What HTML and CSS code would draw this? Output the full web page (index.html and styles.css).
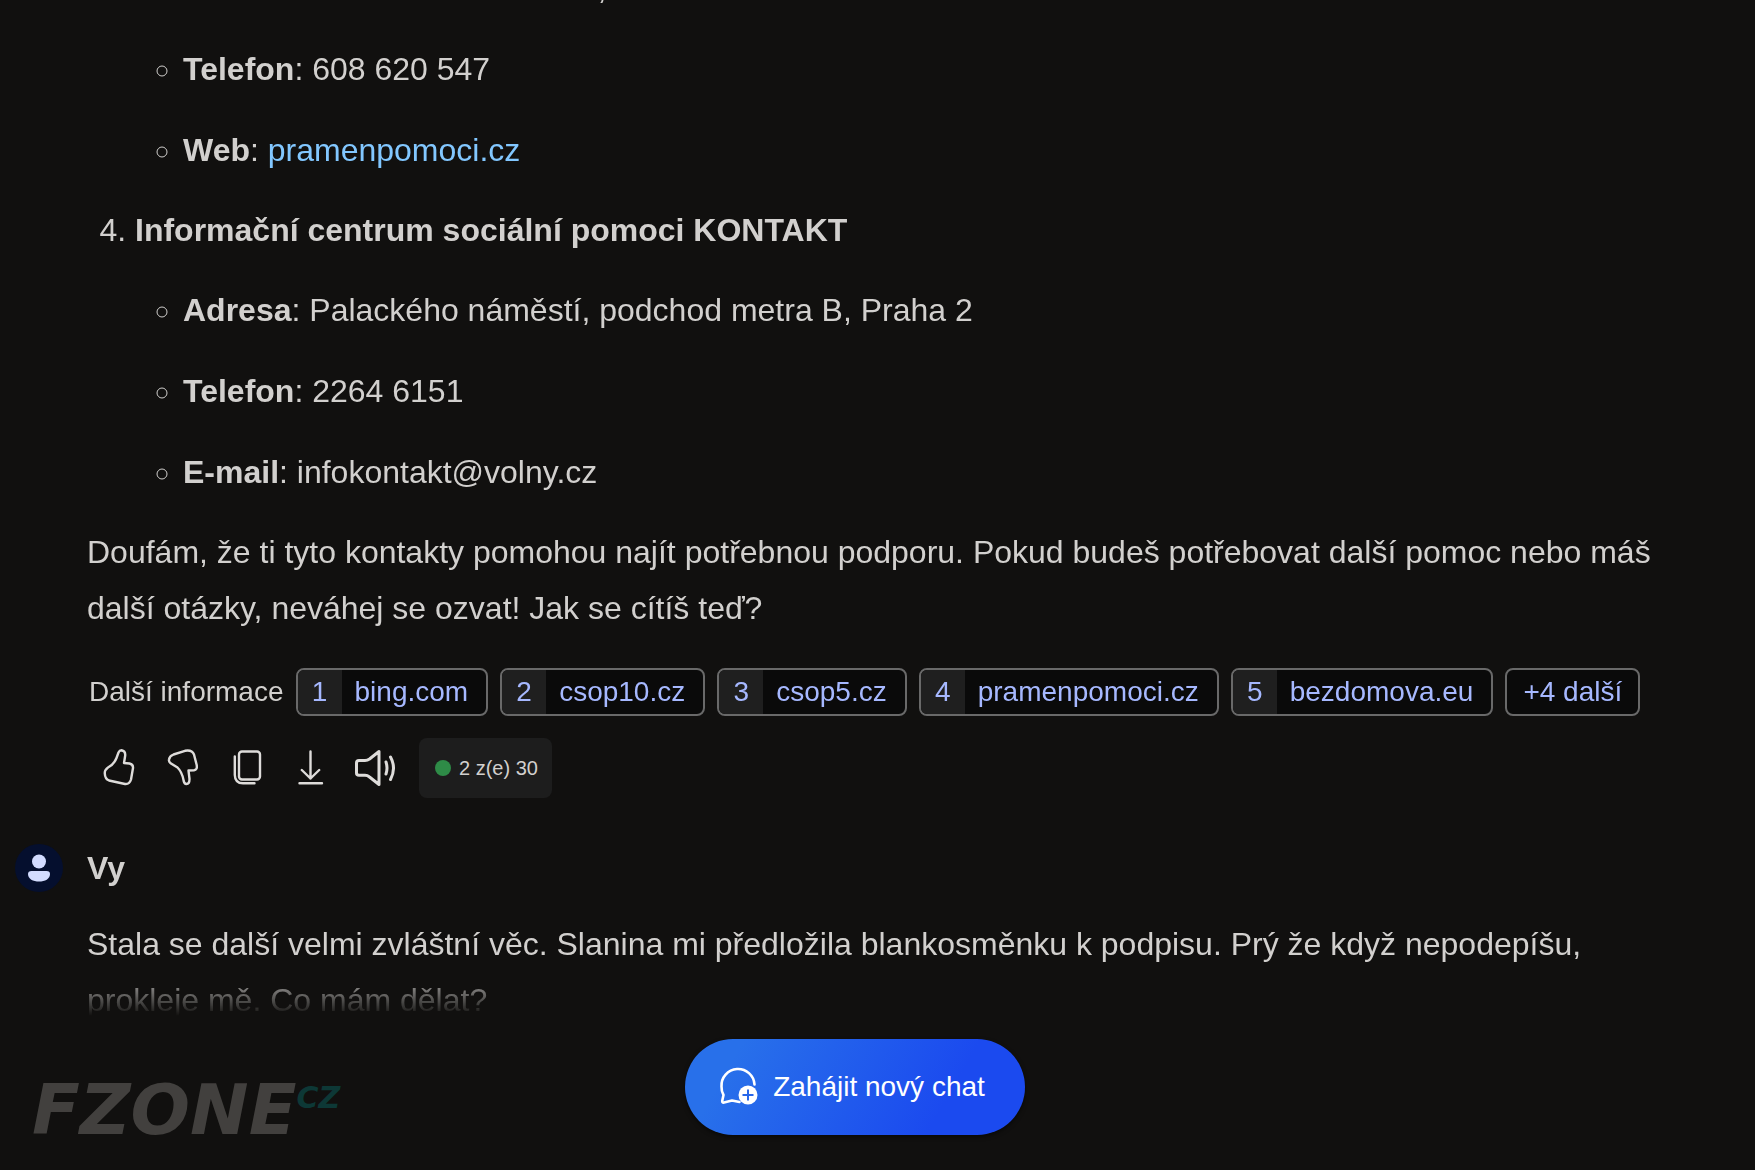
FILE: index.html
```html
<!DOCTYPE html>
<html lang="cs">
<head>
  <meta charset="UTF-8" />
  <meta name="viewport" content="width=device-width, initial-scale=1.0" />
  <title>Chat</title>
  <link rel="stylesheet" href="styles.css">
</head>
<body>
  <main class="messages">
    <article class="answer">
      <ol class="contacts" start="4">
        <li class="previous">
          <ul>
            <li><strong>Adresa</strong>: Na Slovance 146 22,</li>
            <li><strong>Telefon</strong>: 608 620 547</li>
            <li><strong>Web</strong>: <a href="#">pramenpomoci.cz</a></li>
          </ul>
        </li>
        <li value="4">
          <strong>Informační centrum sociální pomoci KONTAKT</strong>
          <ul>
            <li><strong>Adresa</strong>: Palackého náměstí, podchod metra B, Praha 2</li>
            <li><strong>Telefon</strong>: 2264 6151</li>
            <li><strong>E-mail</strong>: infokontakt@volny.cz</li>
          </ul>
        </li>
      </ol>
      <p>Doufám, že ti tyto kontakty pomohou najít potřebnou podporu. Pokud budeš potřebovat další pomoc nebo máš další otázky, neváhej se ozvat! Jak se cítíš teď?</p>

      <div class="sources">
        <span class="sources-label">Další informace</span>
        <a class="chip" href="#"><span class="num">1</span><span class="site">bing.com</span></a>
        <a class="chip" href="#"><span class="num">2</span><span class="site">csop10.cz</span></a>
        <a class="chip" href="#"><span class="num">3</span><span class="site">csop5.cz</span></a>
        <a class="chip" href="#"><span class="num">4</span><span class="site">pramenpomoci.cz</span></a>
        <a class="chip" href="#"><span class="num">5</span><span class="site">bezdomova.eu</span></a>
        <button class="chip more" type="button">+4 další</button>
      </div>

      <div class="actions">
        <button class="icon" type="button" aria-label="To se mi líbí">
          <svg viewBox="0 0 40 40"><path d="M19.5 4.500Q20.500 2.300 22.500 2.300Q26.500 3 26.200 7.500L25 15L30.500 15.500Q34.300 16.500 34 20L32 31.500Q30.500 36.500 26 36L10 32.500Q6 31 5.800 25.500Q5.500 22 9 19.500Q15 16.500 17.500 10Z"/></svg>
        </button>
        <button class="icon" type="button" aria-label="To se mi nelíbí">
          <svg viewBox="0 0 40 40"><path d="M10.500 6.500L22 2.800Q29 1.500 31 6.500L33.700 17Q34.500 22 31 22.300L25.500 22.500L26.500 31Q26.500 36 23.500 36Q21 36 20.500 32Q19 24 14.500 19.500L8 15.500Q5.500 13.500 6 11.500Q6.500 8 10.500 6.500Z"/></svg>
        </button>
        <button class="icon" type="button" aria-label="Kopírovat">
          <svg viewBox="0 0 40 40"><rect x="12" y="3.500" width="21" height="28" rx="3"/><path d="M7.800 8.500V27Q8 35.300 16 35.300H27.500"/></svg>
        </button>
        <button class="icon" type="button" aria-label="Exportovat">
          <svg viewBox="0 0 40 40"><path d="M19.500 3.500V30.500M10.800 22L19.500 30.500L28.200 22M8.500 35.300H31"/></svg>
        </button>
        <button class="icon" type="button" aria-label="Přečíst nahlas">
          <svg class="speaker" viewBox="0 0 40 40"><path d="M4 12.500H10Q12.500 12.500 14.500 11L24 3.500V36.500L14.500 29Q12.500 27.300 10 27.300H4Q1.500 27.300 1.500 25V15Q1.500 12.500 4 12.500Z"/><path d="M31 14Q33 20 31 26M35.500 9Q41.500 20 35.500 31.500"/></svg>
        </button>
        <div class="counter"><span class="dot"></span>2 z(e) 30</div>
      </div>
    </article>

    <article class="user">
      <header class="author">
        <svg class="avatar" viewBox="0 0 48 48"><circle cx="24" cy="24" r="24" fill="#050f2e"/><circle cx="24" cy="17.500" r="7" fill="#d3dcff"/><path d="M16.500 27H31.500Q35 27 35 30C35 35 30 37.500 24 37.500S13 35 13 30Q13 27 16.500 27Z" fill="#d3dcff"/></svg>
        <h2>Vy</h2>
      </header>
      <p>Stala se další velmi zvláštní věc. Slanina mi předložila blankosměnku k podpisu. Prý že když nepodepíšu, prokleje mě. Co mám dělat?</p>
    </article>
  </main>

  <footer class="bottom">
    <button class="new-chat" type="button">
      <svg viewBox="0 0 40 40">
        <path d="M21.500 35L14 33.500L6 35.500Q4 36 4.200 34L5.500 28Q3.300 24 3.500 19.500A16.500 16.500 0 0 1 36.500 17.500" fill="none" stroke="#fff" stroke-width="2.600" stroke-linecap="round" stroke-linejoin="round"/>
        <circle cx="30" cy="28" r="9.500" fill="#fff"/>
        <path d="M24.500 28H35.500M30 22.500V33.500" stroke="#2767ea" stroke-width="2"/>
      </svg>
      Zahájit nový chat
    </button>
    <div class="logo">FZONE<sup>CZ</sup></div>
  </footer>
</body>
</html>
```

FILE: styles.css
```css
* {
  box-sizing: border-box;
}
body {
  margin: 0;
  height: 100vh;
  overflow: hidden;
  display: flex;
  flex-direction: column;
  background-color: #11100f;
  color: #d2d0ce;
  font-family: "Helvetica Neue", "Liberation Sans", Arial, sans-serif;
  font-size: 32px;
  line-height: 56px;
}
button {
  font-family: inherit;
  color: inherit;
  border: none;
  padding: 0;
  cursor: pointer;
}
a {
  color: #82c7ff;
  text-decoration: none;
}
p {
  margin: 0;
}

/* the list is scrolled to its end, the last line fades into the footer */
.messages {
  flex: 1;
  min-height: 0;
  overflow: hidden;
  display: flex;
  flex-direction: column;
  justify-content: flex-end;
  padding: 0 60px 0 87px;
  -webkit-mask-image: linear-gradient(to top, transparent 12px, #000 60px);
  mask-image: linear-gradient(to top, transparent 12px, #000 60px);
}
.contacts, .contacts ul {
  margin: 0;
  padding-left: 48px;
}
.contacts ul {
  list-style: circle;
}
.contacts {
  margin-bottom: 24px;
}
.contacts li + li {
  margin-top: 25px;
}
.contacts > li + li, .contacts strong + ul {
  margin-top: 24px;
}
.previous {
  list-style: none;
}

.sources {
  display: flex;
  align-items: center;
  gap: 12px;
  margin-top: 32px;
  font-size: 28px;
  line-height: 44px;
  white-space: nowrap;
}
.sources-label {
  padding-left: 2px;
}
.chip {
  display: flex;
  border: 2px solid #696969;
  border-radius: 8px;
  overflow: hidden;
  background-color: #0a0a0a;
  color: #a6b8ff;
  font-size: 28px;
  line-height: 44px;
}
.num {
  width: 44px;
  text-align: center;
  background-color: #1f1f1f;
}
.site {
  padding: 0 18px 0 13px;
}
.more {
  padding: 0 16px;
}

.actions {
  display: flex;
  align-items: center;
  gap: 24px;
  margin-top: 22px;
  padding-left: 12px;
}
.icon {
  width: 40px;
  height: 40px;
  background: none;
}
.icon svg {
  display: block;
  fill: none;
  stroke: #dedcda;
  stroke-width: 2.4;
  stroke-linecap: round;
  stroke-linejoin: round;
}
.icon .speaker {
  stroke-width: 3;
}
.counter {
  display: flex;
  align-items: center;
  gap: 8px;
  height: 60px;
  padding: 0 14px 0 16px;
  border-radius: 8px;
  background-color: #1d1d1d;
  font-size: 20px;
}
.dot {
  width: 16px;
  height: 16px;
  border-radius: 50%;
  background-color: #2e8b47;
}

.user {
  margin-top: 46px;
}
.author {
  display: flex;
  align-items: center;
  gap: 24px;
  height: 48px;
  margin: 0 0 24px -72px;
}
.avatar {
  width: 48px;
  height: 48px;
}
.author h2 {
  margin: 0;
  font-size: 32px;
}

.bottom {
  position: relative;
  display: flex;
  justify-content: center;
  padding: 11px 45px 35px 0;
}
.new-chat {
  display: flex;
  align-items: center;
  gap: 15px;
  height: 96px;
  padding: 0 40px 0 33px;
  border-radius: 48px;
  background: linear-gradient(120deg, #2870ea 15%, #1b4aef 75%);
  box-shadow: 0 2px 4px #0008;
  color: #fff;
  font-size: 28px;
}
.new-chat svg {
  width: 40px;
  height: 40px;
}

/* watermark */
.logo {
  position: absolute;
  left: 32px;
  bottom: 28px;
  display: flex;
  align-items: flex-start;
  color: #42403e;
  font: italic bold 70px/64px "DejaVu Sans", sans-serif;
}
.logo sup {
  color: #0d3836;
  font-size: 30px;
  line-height: 40px;
}
```
